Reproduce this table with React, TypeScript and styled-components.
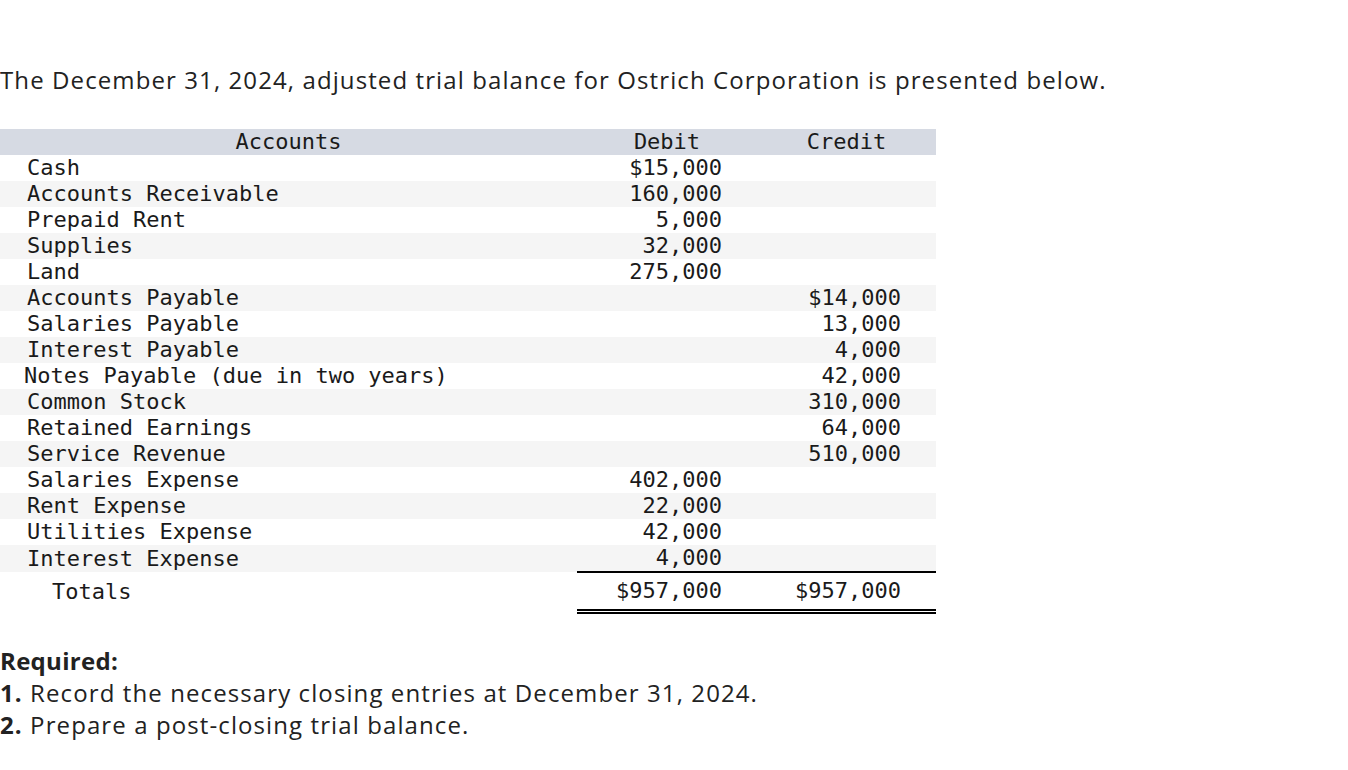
import React from 'react';
import styled, { createGlobalStyle } from 'styled-components';

interface Entry {
  name: string;
  debit?: string;
  credit?: string;
  indent?: number;
}

const entries: Entry[] = [
  { name: 'Cash', debit: '$15,000' },
  { name: 'Accounts Receivable', debit: '160,000' },
  { name: 'Prepaid Rent', debit: '5,000' },
  { name: 'Supplies', debit: '32,000' },
  { name: 'Land', debit: '275,000' },
  { name: 'Accounts Payable', credit: '$14,000' },
  { name: 'Salaries Payable', credit: '13,000' },
  { name: 'Interest Payable', credit: '4,000' },
  { name: 'Notes Payable (due in two years)', credit: '42,000', indent: 24 },
  { name: 'Common Stock', credit: '310,000' },
  { name: 'Retained Earnings', credit: '64,000' },
  { name: 'Service Revenue', credit: '510,000' },
  { name: 'Salaries Expense', debit: '402,000' },
  { name: 'Rent Expense', debit: '22,000' },
  { name: 'Utilities Expense', debit: '42,000' },
  { name: 'Interest Expense', debit: '4,000' },
];

function App() {
  return (
    <>
      <GlobalStyle />
      <PageWrapper>
        <IntroText>
          The December 31, 2024, adjusted trial balance for Ostrich Corporation is presented below.
        </IntroText>
        <BalanceTable>
          <colgroup>
            <col style={{ width: 577 }} />
            <col style={{ width: 180 }} />
            <col style={{ width: 179 }} />
          </colgroup>
          <thead>
            <tr>
              <HeaderCell>Accounts</HeaderCell>
              <HeaderCell>Debit</HeaderCell>
              <HeaderCell>Credit</HeaderCell>
            </tr>
          </thead>
          <tbody>
            {entries.map((entry, i) => (
              <BodyRow key={entry.name} $shaded={i % 2 === 1}>
                <NameCell $indent={entry.indent ?? 27}>{entry.name}</NameCell>
                <AmountCell>{entry.debit}</AmountCell>
                <AmountCell>{entry.credit}</AmountCell>
              </BodyRow>
            ))}
            <tr>
              <NameCell $indent={52}>Totals</NameCell>
              <TotalCell>$957,000</TotalCell>
              <TotalCell>$957,000</TotalCell>
            </tr>
          </tbody>
        </BalanceTable>
        <RequiredBlock>
          <RequiredTitle>Required:</RequiredTitle>
          <RequiredLine><b>1.</b> Record the necessary closing entries at December 31, 2024.</RequiredLine>
          <RequiredLine><b>2.</b> Prepare a post-closing trial balance.</RequiredLine>
        </RequiredBlock>
      </PageWrapper>
    </>
  );
}

const GlobalStyle = createGlobalStyle`
  body {
    margin: 0;
    background: #ffffff;
    color: #222222;
    font-family: "Open Sans", Lato, sans-serif;
  }
`

const PageWrapper = styled.div`
  padding-top: 64px;
`

const IntroText = styled.p`
  margin: 0;
  font-size: 24px;
  line-height: 32px;
  letter-spacing: 1.1px;
  color: #222222;
`

const BalanceTable = styled.table`
  margin-top: 33px;
  width: 936px;
  border-collapse: collapse;
  table-layout: fixed;
  font-family: "DejaVu Sans Mono", monospace;
  font-size: 22px;
  color: #1a1a1a;
`

const HeaderCell = styled.th`
  height: 26px;
  padding: 0;
  background-color: #d6dae3;
  font-weight: normal;
  text-align: center;
  line-height: 26px;
`

const BodyRow = styled.tr<{ $shaded: boolean }>`
  background-color: ${(p) => (p.$shaded ? '#f5f5f5' : '#ffffff')};
`

const NameCell = styled.td<{ $indent: number }>`
  height: 26px;
  padding: 0 0 0 ${(p) => p.$indent}px;
  line-height: 26px;
  white-space: nowrap;
`

const AmountCell = styled.td`
  height: 26px;
  padding: 0 35px 0 0;
  line-height: 26px;
  text-align: right;
`

const TotalCell = styled.td`
  height: 36px;
  padding: 0 35px 0 0;
  line-height: 36px;
  text-align: right;
  border-top: 2px solid #000000;
  border-bottom: 5px double #000000;
`

const RequiredBlock = styled.div`
  margin-top: 31px;
  font-size: 24px;
  line-height: 32px;
  letter-spacing: 1.1px;
  color: #222222;
`

const RequiredTitle = styled.div`
  font-weight: bold;
  letter-spacing: 0.3px;
`

const RequiredLine = styled.div`
  b {
    font-weight: bold;
  }
`

export default App;
